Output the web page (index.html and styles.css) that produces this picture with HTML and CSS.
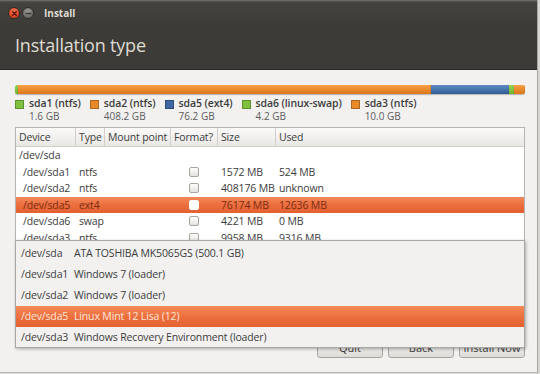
FILE: index.html
```html
<!DOCTYPE html>
<html lang="en">
<head>
  <meta charset="UTF-8">
  <title>Install</title>
  <link rel="stylesheet" href="styles.css">
</head>
<body>
  <div class="window">
    <div class="titlebar">
      <span class="wbtn close">
        <svg width="9" height="9" viewBox="0 0 10 10"><path d="M3 3 L7 7 M7 3 L3 7" stroke="#5a1208" stroke-width="1.5" stroke-linecap="round"/></svg>
      </span>
      <span class="wbtn mini">
        <svg width="9" height="9" viewBox="0 0 10 10"><path d="M2.5 5 H7.5" stroke="#3c3b37" stroke-width="1.5" stroke-linecap="round"/></svg>
      </span>
      <span class="wtitle">Install</span>
    </div>

    <div class="header">
      <h1>Installation type</h1>
    </div>

    <div class="content">
      <div class="bar">
        <div class="seg green" style="flex: 1.6"></div>
        <div class="seg orange" style="flex: 408.2"></div>
        <div class="seg blue" style="flex: 76.2"></div>
        <div class="seg green" style="flex: 4.2"></div>
        <div class="seg orange" style="flex: 10"></div>
      </div>

      <div class="legend">
        <div class="litem">
          <span class="sq green"></span>
          <div><div class="lname">sda1 (ntfs)</div><div class="lsize">1.6 GB</div></div>
        </div>
        <div class="litem">
          <span class="sq orange"></span>
          <div><div class="lname">sda2 (ntfs)</div><div class="lsize">408.2 GB</div></div>
        </div>
        <div class="litem">
          <span class="sq blue"></span>
          <div><div class="lname">sda5 (ext4)</div><div class="lsize">76.2 GB</div></div>
        </div>
        <div class="litem">
          <span class="sq green"></span>
          <div><div class="lname">sda6 (linux-swap)</div><div class="lsize">4.2 GB</div></div>
        </div>
        <div class="litem">
          <span class="sq orange"></span>
          <div><div class="lname">sda3 (ntfs)</div><div class="lsize">10.0 GB</div></div>
        </div>
      </div>

      <div class="table">
        <div class="row head">
          <div class="c dev">Device</div>
          <div class="c type">Type</div>
          <div class="c mount">Mount point</div>
          <div class="c fmt">Format?</div>
          <div class="c size">Size</div>
          <div class="c used">Used</div>
        </div>
        <div class="row">
          <div class="c dev">/dev/sda</div>
        </div>
        <div class="row">
          <div class="c dev sub">/dev/sda1</div>
          <div class="c type">ntfs</div>
          <div class="c mount"></div>
          <div class="c fmt"><span class="check"></span></div>
          <div class="c size">1572 MB</div>
          <div class="c used">524 MB</div>
        </div>
        <div class="row">
          <div class="c dev sub">/dev/sda2</div>
          <div class="c type">ntfs</div>
          <div class="c mount"></div>
          <div class="c fmt"><span class="check"></span></div>
          <div class="c size">408176 MB</div>
          <div class="c used">unknown</div>
        </div>
        <div class="row sel">
          <div class="c dev sub">/dev/sda5</div>
          <div class="c type">ext4</div>
          <div class="c mount"></div>
          <div class="c fmt"><span class="check"></span></div>
          <div class="c size">76174 MB</div>
          <div class="c used">12636 MB</div>
        </div>
        <div class="row">
          <div class="c dev sub">/dev/sda6</div>
          <div class="c type">swap</div>
          <div class="c mount"></div>
          <div class="c fmt"><span class="check"></span></div>
          <div class="c size">4221 MB</div>
          <div class="c used">0 MB</div>
        </div>
        <div class="row">
          <div class="c dev sub">/dev/sda3</div>
          <div class="c type">ntfs</div>
          <div class="c mount"></div>
          <div class="c fmt"><span class="check"></span></div>
          <div class="c size">9958 MB</div>
          <div class="c used">9316 MB</div>
        </div>
      </div>

      <div class="buttons">
        <button>Quit</button>
        <button>Back</button>
        <button>Install Now</button>
      </div>
    </div>

    <!-- boot loader device dropdown, open -->
    <div class="popup">
      <div class="pitem"><span class="pdev">/dev/sda</span>ATA TOSHIBA MK5065GS (500.1 GB)</div>
      <div class="pitem"><span class="pdev">/dev/sda1</span>Windows 7 (loader)</div>
      <div class="pitem"><span class="pdev">/dev/sda2</span>Windows 7 (loader)</div>
      <div class="pitem psel"><span class="pdev">/dev/sda5</span>Linux Mint 12 Lisa (12)</div>
      <div class="pitem"><span class="pdev">/dev/sda3</span>Windows Recovery Environment (loader)</div>
    </div>
  </div>
</body>
</html>
```

FILE: styles.css
```css
 body{
   margin: 0;
   background: #d8d6d2;
   font-family: "Open Sans", "DejaVu Sans", sans-serif;
   font-size: 11px;
   color: #3c3c3c;
   overflow: hidden;
 }

 .window{
   position: relative;
   width: 537px;
   height: 372px;
   background: #f2f1f0;
   border-right: 1px solid #a8a6a0;
   border-bottom: 1px solid #b8b6b0;
   overflow: hidden;
 }

 .titlebar{
   height: 25px;
   display: flex;
   align-items: center;
   padding-left: 8px;
   gap: 2px;
   background: linear-gradient(#55544f, #43423e 8%, #3d3c38);
   border-top: 1px solid #6a6963;
   box-sizing: border-box;
 }

 .wbtn{
   width: 10px;
   height: 10px;
   border-radius: 50%;
   display: flex;
   align-items: center;
   justify-content: center;
 }

 .close{
   background: radial-gradient(circle at 50% 35%, #f47a55, #d9421c 70%);
   border: 1px solid #2e2d2a;
 }

 .mini{
   background: radial-gradient(circle at 50% 35%, #9b9993, #6d6b66 70%);
   border: 1px solid #2e2d2a;
 }

 .wtitle{
   margin-left: 8px;
   color: #dfdbd2;
   font-weight: bold;
   font-size: 10px;
 }

 .header{
   height: 44px;
   background: #3c3b37;
   border-bottom: 1px solid #2a2926;
   display: flex;
   align-items: center;
   padding-left: 15px;
 }

 .header h1{
   margin: -4px 0 0 0;
   font-weight: normal;
   font-size: 18px;
   letter-spacing: -0.2px;
   color: #dfdbd2;
 }

 .content{
   padding: 15px 12px 0 15px;
 }

 .bar{
   height: 9px;
   display: flex;
   border-radius: 2px;
   overflow: hidden;
   box-shadow: 0 1px 1px rgba(0,0,0,0.25);
 }

 .seg{
   border-right: 1px solid rgba(0,0,0,0.08);
 }

 .seg.green{ background: linear-gradient(#9ad45a, #6fb52c); }
 .seg.orange{ background: linear-gradient(#f7a24a, #e8862a 60%, #d9771e); }
 .seg.blue{ background: linear-gradient(#5f8cc4, #4270a8 60%, #345d91); }

 .legend{
   display: flex;
   gap: 9px;
   margin-top: 6px;
   height: 21px;
 }

 .litem{
   display: flex;
   gap: 5px;
 }

 .sq{
   width: 7px;
   height: 7px;
   border: 1px solid rgba(0,0,0,0.25);
 }

 .sq.green{ background: #7fc03e; }
 .sq.orange{ background: #e98a2a; }
 .sq.blue{ background: #3f67a2; }

 .lname{
   font-size: 10.5px;
   line-height: 12px;
   margin-top: -3px;
   font-weight: 600;
   letter-spacing: -0.1px;
   color: #3c3c3c;
 }

 .lsize{
   font-size: 10px;
   line-height: 11px;
   margin-top: 2px;
   color: #5c5c5c;
 }

 .table{
   margin-top: 6px;
   height: 140px;
   background: #fff;
   border: 1px solid #b6b3ad;
   overflow: hidden;
   font-size: 10.5px;
   letter-spacing: -0.15px;
 }

 .row{
   display: flex;
   height: 16.5px;
   align-items: center;
 }

 .row.head{
   height: 18px;
   background: linear-gradient(#fbfaf9, #e9e7e4);
   border-bottom: 1px solid #d2cfca;
 }

 .row.head .c{
   border-right: 1px solid #d2cfca;
   height: 18px;
   line-height: 18px;
 }

 .c{
   padding-left: 3px;
   box-sizing: border-box;
   white-space: nowrap;
 }

 .dev{ width: 60px; }
 .type{ width: 29px; }
 .mount{ width: 66px; }
 .fmt{ width: 47px; }
 .size{ width: 58px; }
 .used{ flex: 1; }

 .dev.sub{ padding-left: 7px; }

 .row.head .used{ border-right: none; }

 .fmt{
   display: flex;
   padding-left: 18px;
 }

 .row.head .fmt{ padding-left: 3px; }

 .check{
   width: 8px;
   height: 8px;
   border: 1px solid #a9a6a0;
   border-radius: 2px;
   background: linear-gradient(#fdfdfc, #e4e2df);
 }

 .row.sel{
   background: linear-gradient(#f38a58, #ec6e3f 50%, #e3602f);
   color: #7a2c12;
 }

 .row.sel .check{
   background: #fff;
   border-color: #fff;
 }

 .buttons{
   display: flex;
   justify-content: flex-end;
   gap: 5px;
   margin-top: 67px;
 }

 .buttons button{
   width: 66px;
   height: 22px;
   font-family: inherit;
   font-size: 11px;
   color: #3c3c3c;
   border: 1px solid #a7a49e;
   border-radius: 3px;
   background: linear-gradient(#f8f7f6, #dedcd8);
   padding: 0;
 }

 .popup{
   position: absolute;
   left: 15px;
   top: 240px;
   width: 510px;
   height: 108px;
   box-sizing: border-box;
   padding-top: 2px;
   background: #f2f1f0;
   border: 1px solid #a9a7a1;
   box-shadow: 1px 1px 3px rgba(0,0,0,0.3);
 }

 .pitem{
   height: 21px;
   line-height: 21px;
   padding-left: 5px;
   font-size: 10.5px;
   letter-spacing: -0.15px;
   color: #3c3c3c;
   white-space: nowrap;
 }

 .pdev{
   display: inline-block;
   width: 53px;
 }

 .psel{
   background: linear-gradient(#f58a56, #ec6f3f 50%, #e5622f);
   color: #fde7da;
 }
```
